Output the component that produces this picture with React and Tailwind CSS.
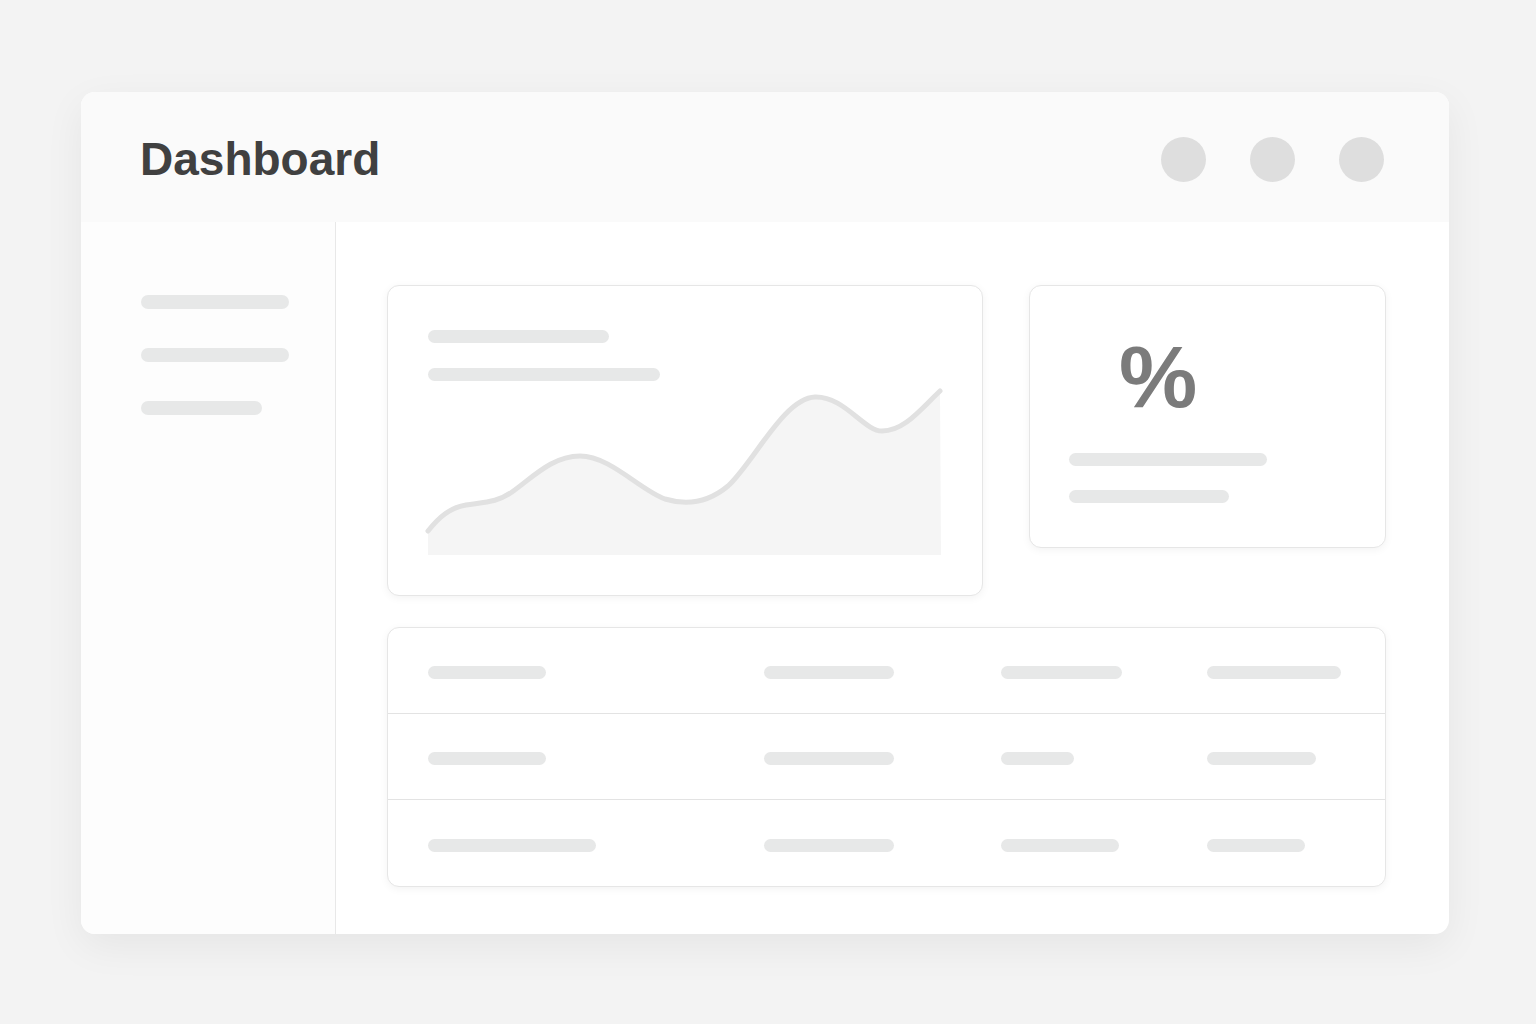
import React from 'react';

const Bar = ({ w, h = 'h-[13px]' }) => (
  <div className={`${h} rounded-full bg-[#e7e8e8]`} style={{ width: w }} />
);

const rows = [
  [118, 130, 121, 134],
  [118, 130, 73, 109],
  [168, 130, 118, 98],
];

function TrendChart() {
  const line =
    'M428,531 C440,516 450,508 466,505 C486,502 498,502 512,492 C532,478 552,456 580,456 C610,456 640,490 665,499 C688,506 710,501 728,486 C754,462 784,398 815,397 C844,396 864,431 882,431 C904,431 920,410 940,391';
  return (
    <svg viewBox="424 385 520 171" className="mt-[4px] block h-[171px] w-[520px] -ml-[4px]">
      <path d={`${line} L941,555 L428,555 Z`} fill="#f5f5f5" />
      <path d={line} fill="none" stroke="#e1e1e1" strokeWidth="5" strokeLinecap="round" />
    </svg>
  );
}

export default function App() {
  return (
    <div
      className="min-h-screen bg-[#f3f3f3] pt-[92px] pl-[81px]"
      style={{ fontFamily: '"Liberation Sans", Arial, sans-serif' }}
    >
      <div className="w-[1368px] h-[842px] rounded-[14px] bg-white overflow-hidden shadow-[0_12px_40px_rgba(0,0,0,0.06)] flex flex-col">
        <header className="h-[130px] shrink-0 bg-[#fafafa] flex items-center justify-between pl-[59px] pr-[65px] pt-[4px]">
          <h1 className="text-[46px] leading-none font-bold text-[#404040]">Dashboard</h1>
          <div className="flex gap-[44px]">
            <div className="w-[45px] h-[45px] rounded-full bg-[#dedede]" />
            <div className="w-[45px] h-[45px] rounded-full bg-[#dedede]" />
            <div className="w-[45px] h-[45px] rounded-full bg-[#dedede]" />
          </div>
        </header>

        <div className="flex flex-1">
          <aside className="w-[255px] shrink-0 border-r border-[#e8e8e8] bg-[#fdfdfd] pl-[60px] pt-[73px] flex flex-col gap-[39px]">
            <Bar w={148} h="h-[14px]" />
            <Bar w={148} h="h-[14px]" />
            <Bar w={121} h="h-[14px]" />
          </aside>

          <main className="flex-1 pl-[51px] pr-[63px] pt-[63px] flex flex-col gap-[31px]">
            <div className="flex items-start gap-[46px]">
              <div className="w-[596px] h-[311px] rounded-xl border border-[#e6e6e6] bg-white shadow-[0_2px_8px_rgba(0,0,0,0.05)] pl-[40px] pt-[44px]">
                <div className="flex flex-col gap-[25px]">
                  <Bar w={181} />
                  <Bar w={232} />
                </div>
                <TrendChart />
              </div>

              <div className="w-[357px] h-[263px] rounded-xl border border-[#e6e6e6] bg-white shadow-[0_2px_8px_rgba(0,0,0,0.05)] pl-[39px] pt-[47px]">
                <div className="ml-[50px] text-[88px] leading-none font-bold text-[#7b7b7b]">%</div>
                <div className="mt-[32px] flex flex-col gap-[24px]">
                  <Bar w={198} />
                  <Bar w={160} />
                </div>
              </div>
            </div>

            <div className="w-[999px] rounded-xl border border-[#e6e6e6] bg-white shadow-[0_2px_8px_rgba(0,0,0,0.05)]">
              {rows.map((r, i) => (
                <div
                  key={i}
                  className={`h-[86px] pl-[40px] pt-[4px] grid grid-cols-[336px_237px_206px_1fr] items-center ${
                    i < rows.length - 1 ? 'border-b border-[#e3e3e3]' : ''
                  }`}
                >
                  {r.map((w, j) => (
                    <Bar key={j} w={w} />
                  ))}
                </div>
              ))}
            </div>
          </main>
        </div>
      </div>
    </div>
  );
}
